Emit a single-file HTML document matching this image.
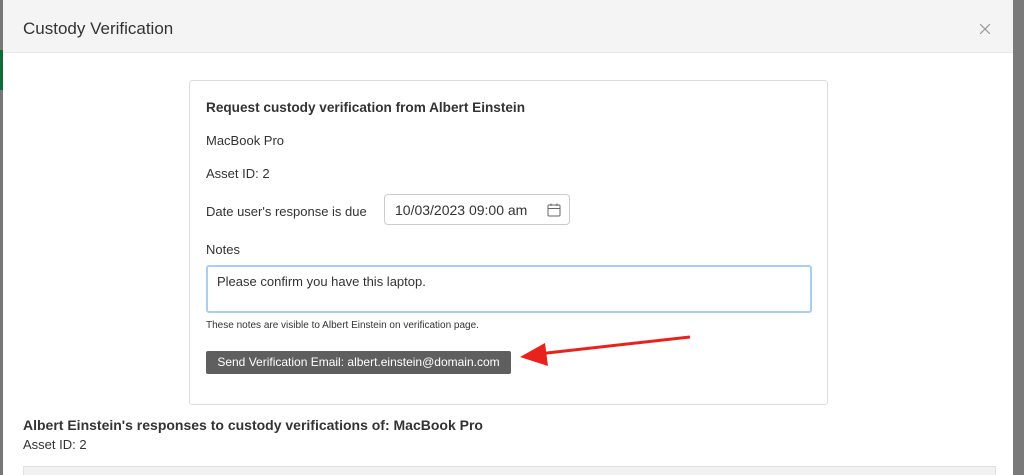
<!DOCTYPE html>
<html><head><style>
body{margin:0;width:1024px;height:475px;overflow:hidden;background:#7a7a7a;font-family:"Liberation Sans",sans-serif;color:#333;position:relative}
.l{position:absolute;left:0;top:0;width:3px;height:475px;background:#777}
.g{position:absolute;left:0;top:50px;width:3px;height:40px;background:#0e6b3a}
.m{position:absolute;left:3px;top:0;width:1010px;height:475px;background:#fff;overflow:hidden}
.h{height:52px;background:#f4f4f4;border-bottom:1px solid #e8e8e8;position:relative}
.h .t{position:absolute;left:20px;top:19px;font-size:17px;color:#333}
.h svg{position:absolute;left:977px;top:24px}
.p{position:absolute;left:186px;top:80px;width:637px;height:323px;border:1px solid #ddd;border-radius:3px}
.a{position:absolute;font-size:13px;color:#333}
.b{font-weight:bold;font-size:13.6px}
.in{position:absolute;left:194px;top:113px;width:186px;height:31px;border:1px solid #ccc;border-radius:4px;box-sizing:border-box;font-size:14px;padding:7px 10px}
.ta{position:absolute;left:16px;top:184px;width:606px;height:48px;border:2px solid #a9cdf3;border-radius:3px;box-sizing:border-box;font-size:13px;padding:7px 9px}
.btn{position:absolute;left:16px;top:270px;width:305px;height:23px;background:#5f5f5f;color:#fff;font-size:12px;line-height:23px;text-align:center;border-radius:2px}
.tb{position:absolute;left:20px;top:466px;width:971px;height:12px;background:#f2f2f2;border:1px solid #e0e0e0}
</style></head><body>
<div class="l"></div><div class="g"></div>
<div class="m">
<div class="h"><div class="t">Custody Verification</div><svg width="10" height="10" viewBox="0 0 10 10" stroke="#999" stroke-width="1.2"><line x1="0" y1="0" x2="10" y2="10"/><line x1="10" y1="0" x2="0" y2="10"/></svg></div>
<div class="p">
<div class="a b" style="left:16px;top:19px">Request custody verification from Albert Einstein</div>
<div class="a" style="left:16px;top:52px">MacBook Pro</div>
<div class="a" style="left:16px;top:85px">Asset ID: 2</div>
<div class="a" style="left:16px;top:123px">Date user's response is due</div>
<div class="in">10/03/2023 09:00 am
<svg style="position:absolute;right:8px;top:8px" width="14" height="14" viewBox="0 0 14 14" fill="none" stroke="#666"><rect x="1" y="2" width="12" height="11" rx="1"/><line x1="1" y1="5.5" x2="13" y2="5.5"/><line x1="4" y1="0.5" x2="4" y2="3"/><line x1="10" y1="0.5" x2="10" y2="3"/></svg></div>
<div class="a" style="left:16px;top:161px">Notes</div>
<div class="ta">Please confirm you have this laptop.</div>
<div class="a" style="left:16px;top:239px;font-size:10px">These notes are visible to Albert Einstein on verification page.</div>
<div class="btn">Send Verification Email: albert.einstein@domain.com</div>
</div>
<svg style="position:absolute;left:500px;top:330px" width="200" height="40"><line x1="187" y1="7" x2="35" y2="24" stroke="#e8231b" stroke-width="3"/><polygon points="17,27 42,13 45,36" fill="#e8231b"/></svg>
<div class="a b" style="left:20px;top:417px;font-size:14px">Albert Einstein's responses to custody verifications of: MacBook Pro</div>
<div class="a" style="left:20px;top:437px">Asset ID: 2</div>
<div class="tb"></div>
</div>
</body></html>
